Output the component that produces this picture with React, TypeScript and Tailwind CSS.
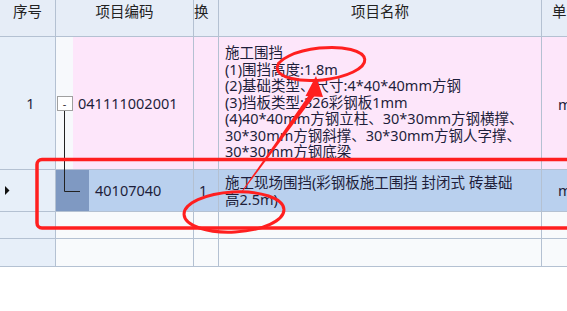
import React from 'react';

const line = 'border-r border-b border-[#b4c1d2]';

const nameLines = [
  '施工围挡',
  '(1)围挡高度:1.8m',
  '(2)基础类型、尺寸:4*40*40mm方钢',
  '(3)挡板类型:326彩钢板1mm',
  '(4)40*40mm方钢立柱、30*30mm方钢横撑、',
  '30*30mm方钢斜撑、30*30mm方钢人字撑、',
  '30*30mm方钢底梁',
];

export default function App() {
  return (
    <div className="relative w-[567px] h-[311px] overflow-hidden bg-white text-[#1e1e3a] text-[14.5px] leading-[16.5px] font-['Noto_Sans','Noto_Sans_CJK_SC',sans-serif]">
      <div className="grid grid-cols-[56px_138px_25px_323px_80px] grid-rows-[37px_133px_42px_27px_28px] w-[622px]">
        {/* header */}
        <div className={`${line} bg-[#e6edf7] text-center pt-[3px] text-[#222]`}>序号</div>
        <div className={`${line} bg-[#e6edf7] text-center pt-[3px] text-[#222]`}>项目编码</div>
        <div className={`${line} bg-[#e6edf7] pt-[3px] text-[#222] overflow-hidden whitespace-nowrap`}>换</div>
        <div className={`${line} bg-[#e6edf7] text-center pt-[3px] text-[#222]`}>项目名称</div>
        <div className={`${line} bg-[#e6edf7] pl-[10px] pt-[3px] text-[#222]`}>单位</div>

        {/* row 1 */}
        <div className={`${line} bg-[#e7eff9] flex items-center justify-center pl-[6px]`}>1</div>
        <div className={`${line} flex`}>
          <div className="w-[17px] bg-[#f7f9fc] flex items-center justify-center">
            <div className="w-[16px] h-[15px] border border-[#a0a0a0] bg-white flex items-center justify-center text-[11px] leading-none text-[#333]">-</div>
          </div>
          <div className="flex-1 bg-[#fde6fa] flex items-center pl-[5px] pt-[1px]">041111002001</div>
        </div>
        <div className={`${line} bg-[#fde6fa]`} />
        <div className={`${line} bg-[#fde6fa] pl-[6px] pt-[7px] overflow-hidden whitespace-nowrap`}>
          {nameLines.map((t) => (
            <div key={t}>{t}</div>
          ))}
        </div>
        <div className={`${line} bg-[#fde6fa] flex items-center pl-[16px] pt-[3px]`}>m</div>

        {/* row 2 (selected) */}
        <div className={`${line} bg-[#e7eff9] flex items-center pl-[5px]`}>
          <svg width="5" height="9" viewBox="0 0 5 9">
            <polygon points="0,0 4.5,4.5 0,9" fill="#111" />
          </svg>
        </div>
        <div className={`${line} flex`}>
          <div className="w-[33px] bg-[#7f99c2]" />
          <div className="flex-1 bg-[#b9d0ee] flex items-center pl-[6px]">40107040</div>
        </div>
        <div className={`${line} bg-[#b9d0ee] flex items-center pl-[5px]`}>1</div>
        <div className={`${line} bg-[#b9d0ee] pl-[6px] pt-[4px] whitespace-nowrap overflow-hidden`}>
          <div>施工现场围挡(彩钢板施工围挡 封闭式 砖基础</div>
          <div>高2.5m)</div>
        </div>
        <div className={`${line} bg-[#b9d0ee] flex items-center pl-[16px]`}>m</div>

        {/* empty rows */}
        <div className={`${line} bg-[#e7eff9]`} />
        <div className={`${line} bg-[#f8fafc]`} />
        <div className={`${line} bg-[#f8fafc]`} />
        <div className={`${line} bg-[#f8fafc]`} />
        <div className={`${line} bg-[#f8fafc]`} />

        <div className={`${line} bg-[#e7eff9]`} />
        <div className={`${line} bg-[#f8fafc]`} />
        <div className={`${line} bg-[#f8fafc]`} />
        <div className={`${line} bg-[#f8fafc]`} />
        <div className={`${line} bg-[#f8fafc]`} />
      </div>

      {/* tree connector and red annotations */}
      <svg className="absolute inset-0 pointer-events-none" width="567" height="311" viewBox="0 0 567 311">
        <path d="M64.5 111 V191.5 H80" stroke="#222" strokeWidth="1" fill="none" />
        <rect x="37" y="159.5" width="560" height="68.5" rx="5" fill="none" stroke="#ff1f1f" strokeWidth="3.5" />
        <ellipse cx="321" cy="64" rx="44" ry="16" transform="rotate(-6 321 64)" fill="none" stroke="#ff1f1f" strokeWidth="3" />
        <ellipse cx="234" cy="212" rx="50" ry="20" transform="rotate(-3 234 212)" fill="none" stroke="#ff1f1f" strokeWidth="3" />
        <polygon points="240.5,193 241.5,193 316,94 311,92" fill="#ff1f1f" />
        <polygon points="316,76 305.5,96 323,97" fill="#ff1f1f" />
      </svg>
    </div>
  );
}
